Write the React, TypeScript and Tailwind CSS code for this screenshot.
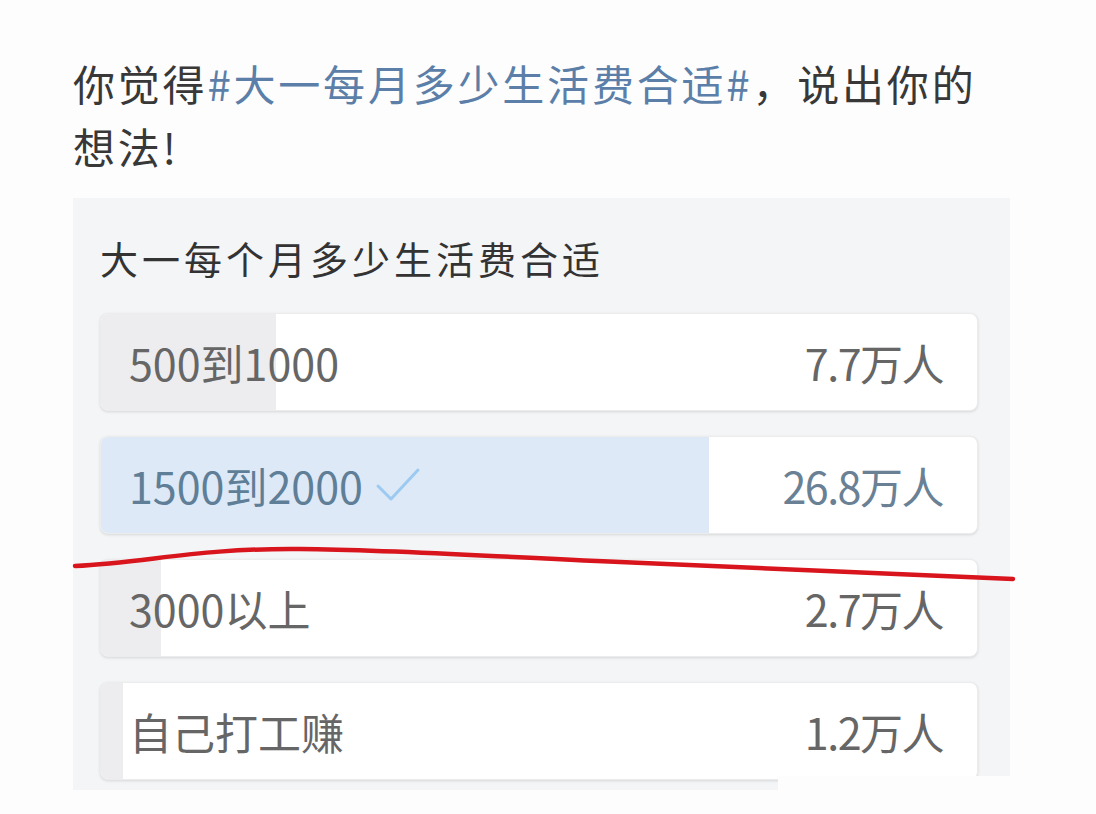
const options = [
  { label: "500到1000", count: "7.7万人", fill: 175, voted: false },
  { label: "1500到2000", count: "26.8万人", fill: 608, voted: true },
  { label: "3000以上", count: "2.7万人", fill: 60, voted: false },
  { label: "自己打工赚", count: "1.2万人", fill: 22, voted: false },
];

function Check() {
  return (
    <svg width="46" height="36" viewBox="0 0 46 36" className="ml-[12px]">
      <path d="M3 19 L16 32 L43 3" fill="none" stroke="#9ccaf0" strokeWidth="3" strokeLinecap="round" strokeLinejoin="round" />
    </svg>
  );
}

export default function App() {
  return (
    <div className="relative w-[1096px] h-[814px] overflow-hidden bg-[#fdfdfd] font-['Noto_Sans_CJK_SC','Noto_Sans',sans-serif]">
      <div className="pl-[73px] pt-[51px]">
        <div className="text-[42px] leading-[63px] tracking-[2.8px] text-[#383838]">
          <p>
            你觉得<span className="text-[#5b7fa8]">#大一每月多少生活费合适#</span>，说出你的
          </p>
          <p>想法!</p>
        </div>

        <div className="mt-[21px] w-[937px] bg-[#f4f5f7] pt-[35px] pb-[10px]">
          <h2 className="pl-[27px] text-[38px] leading-[50px] tracking-[4px] text-[#333]">大一每个月多少生活费合适</h2>
          <div className="mt-[30px] ml-[27px] flex flex-col gap-[25px]">
            {options.map((o) => (
              <div
                key={o.label}
                className="relative w-[878px] h-[98px] rounded-[8px] bg-white overflow-hidden shadow-[0_1px_3px_rgba(0,0,0,0.12)] border border-[#ececec]"
              >
                <div
                  className={o.voted ? "absolute inset-y-0 left-0 bg-[#dde9f6]" : "absolute inset-y-0 left-0 bg-[#ededef]"}
                  style={{ width: o.fill }}
                />
                <div className="relative h-full flex items-center justify-between pl-[28px] pr-[34px] text-[43px]">
                  <span className={o.voted ? "flex items-center text-[#5f7e97]" : "flex items-center text-[#666]"}>
                    {o.label}
                    {o.voted && <Check />}
                  </span>
                  <span className={o.voted ? "tracking-[-1.5px] text-[#6a8195]" : "tracking-[-1.5px] text-[#666]"}>{o.count}</span>
                </div>
              </div>
            ))}
          </div>
        </div>
      </div>

      <div className="absolute left-[778px] top-[776px] w-[318px] h-[38px] bg-[#fdfdfd]" />

      <svg className="absolute inset-0 pointer-events-none" width="1096" height="814">
        <path
          d="M75 566 C 150 562, 200 548, 300 549 S 480 556, 620 562 S 900 574, 1013 579"
          fill="none"
          stroke="#d8141c"
          strokeWidth="4.5"
          strokeLinecap="round"
        />
      </svg>
    </div>
  );
}
